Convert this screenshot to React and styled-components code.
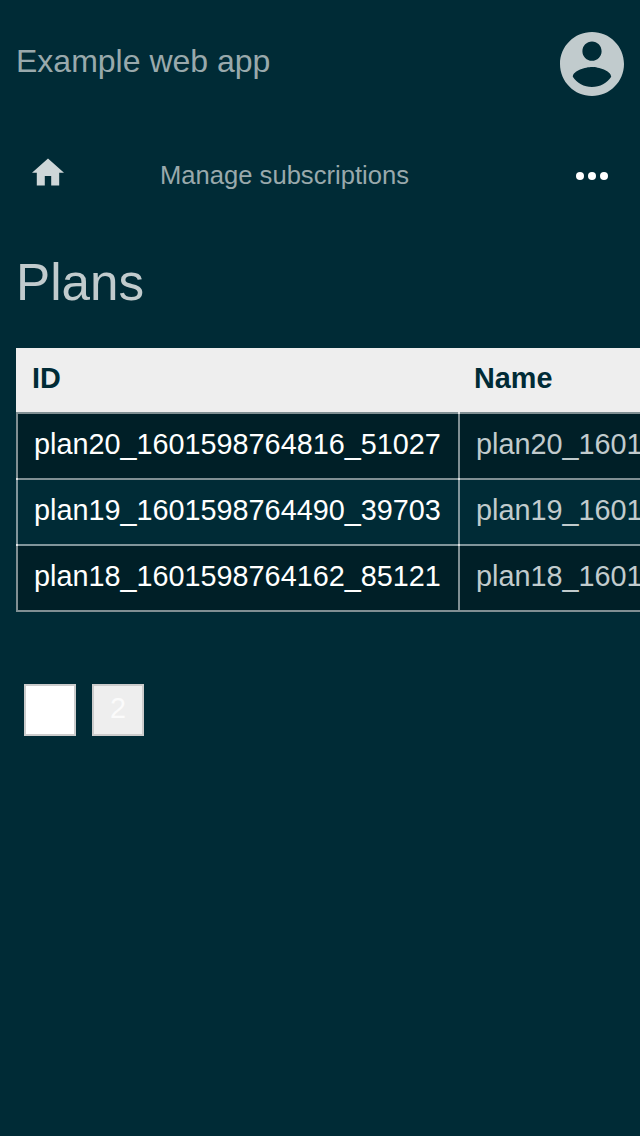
import React from "react";
import styled, { createGlobalStyle } from "styled-components";

const GlobalStyle = createGlobalStyle`
  * { box-sizing: border-box; }
  body {
    margin: 0;
    background: #002b36;
    color: #c1cbcd;
    font-family: "Liberation Sans", Arial, sans-serif;
    overflow: hidden;
  }
`;

const Page = styled.div`
  min-height: 1136px;
  width: 100%;
  overflow: hidden;
`;

const Header = styled.header`
  display: flex;
  align-items: center;
  justify-content: space-between;
  height: 128px;
  padding: 0 16px;
`;

const AppName = styled.a`
  font-size: 32px;
  line-height: 36px;
  padding-bottom: 6px;
  color: #99a9ac;
`;

const Avatar = styled.svg`
  display: block;
  width: 64px;
  height: 64px;
  fill: #c1cbcd;
`;

const Nav = styled.nav`
  display: flex;
  align-items: center;
  height: 96px;
  padding: 0 32px;
`;

const HomeIcon = styled.svg`
  width: 32px;
  height: 28px;
  margin: 0 96px 8px 0;
  fill: #ced6d8;
`;

const NavTitle = styled.span`
  flex: 1;
  font-size: 25.6px;
  padding-bottom: 2px;
  color: #99a9ac;
`;

const Dots = styled.svg`
  width: 32px;
  height: 8px;
  fill: #fff;
`;

const Title = styled.h1`
  margin: 29px 16px 35px;
  font-size: 51.2px;
  line-height: 60px;
  font-weight: 400;
`;

const Table = styled.table`
  width: 900px;
  margin-left: 16px;
  table-layout: fixed;
  border-collapse: separate;
  border-spacing: 0;
  font-size: 28.8px;
  line-height: 32px;
`;

const HeadCell = styled.th`
  width: ${(p) => p.$width};
  height: 64px;
  padding: 0 16px 4px;
  text-align: left;
  background: #eee;
  color: #002b36;
`;

const Row = styled.tr`
  background: ${(p) => (p.$shaded ? "#001f27" : "transparent")};
`;

const Cell = styled.td`
  height: ${(p) => (p.$first ? "68px" : "66px")};
  padding: 0 16px 4px;
  border: 0 solid rgba(255, 255, 255, 0.5);
  border-left-width: 2px;
  border-bottom-width: 2px;
  border-top-width: ${(p) => (p.$first ? "2px" : "0")};
  background-image: linear-gradient(#c0c7c9, #c0c7c9),
    linear-gradient(#c0c7c9, #c0c7c9);
  background-repeat: no-repeat;
  background-origin: border-box;
  background-clip: border-box;
  background-position: left bottom, left top;
  background-size: ${(p) => (p.$last ? "0 0" : "2px 2px")},
    ${(p) => (p.$first && !p.$link ? "2px 2px" : "0 0")};
  color: ${(p) => (p.$link ? "#fff" : "#c1cbcd")};
  white-space: nowrap;
`;

const Pagination = styled.div`
  display: flex;
  gap: 16px;
  margin: 72px 24px 0;
`;

const PageButton = styled.button`
  width: 52px;
  height: 52px;
  padding: 0 0 4px;
  border: 2px solid #ccc;
  background: ${(p) => (p.$active ? "#fff" : "#eee")};
  color: ${(p) => (p.$active ? "#fff" : "#fbfbfb")};
  font: 28.8px "Liberation Sans", Arial, sans-serif;
`;

const plans = [
  "plan20_1601598764816_51027",
  "plan19_1601598764490_39703",
  "plan18_1601598764162_85121",
];

export default function App() {
  return (
    <Page>
      <GlobalStyle />
      <Header>
        <AppName>Example web app</AppName>
        <Avatar viewBox="2 2 20 20">
          <path d="M12 2C6.48 2 2 6.48 2 12s4.48 10 10 10 10-4.48 10-10S17.52 2 12 2zm0 3c1.66 0 3 1.34 3 3s-1.34 3-3 3-3-1.34-3-3 1.34-3 3-3zm0 14.2c-2.5 0-4.71-1.28-6-3.22.03-1.99 4-3.08 6-3.08 1.99 0 5.97 1.09 6 3.08-1.29 1.94-3.5 3.22-6 3.22z" />
        </Avatar>
      </Header>
      <Nav>
        <HomeIcon viewBox="2 2.75 20 17.5">
          <path d="M10 20v-6h4v6h5v-8h3L12 3 2 12h3v8z" />
        </HomeIcon>
        <NavTitle>Manage subscriptions</NavTitle>
        <Dots viewBox="0 0 32 8">
          <circle cx="4" cy="4" r="4" />
          <circle cx="16" cy="4" r="4" />
          <circle cx="28" cy="4" r="4" />
        </Dots>
      </Nav>
      <Title>Plans</Title>
      <Table>
        <thead>
          <tr>
            <HeadCell $width="442px">ID</HeadCell>
            <HeadCell>Name</HeadCell>
          </tr>
        </thead>
        <tbody>
          {plans.map((id, i) => {
            const first = i === 0;
            const last = i === plans.length - 1;
            return (
              <Row key={id} $shaded={i % 2 === 0}>
                <Cell $link $first={first} $last={last}>{id}</Cell>
                <Cell $first={first} $last={last}>{id}</Cell>
              </Row>
            );
          })}
        </tbody>
      </Table>
      <Pagination>
        <PageButton $active>1</PageButton>
        <PageButton>2</PageButton>
      </Pagination>
    </Page>
  );
}
